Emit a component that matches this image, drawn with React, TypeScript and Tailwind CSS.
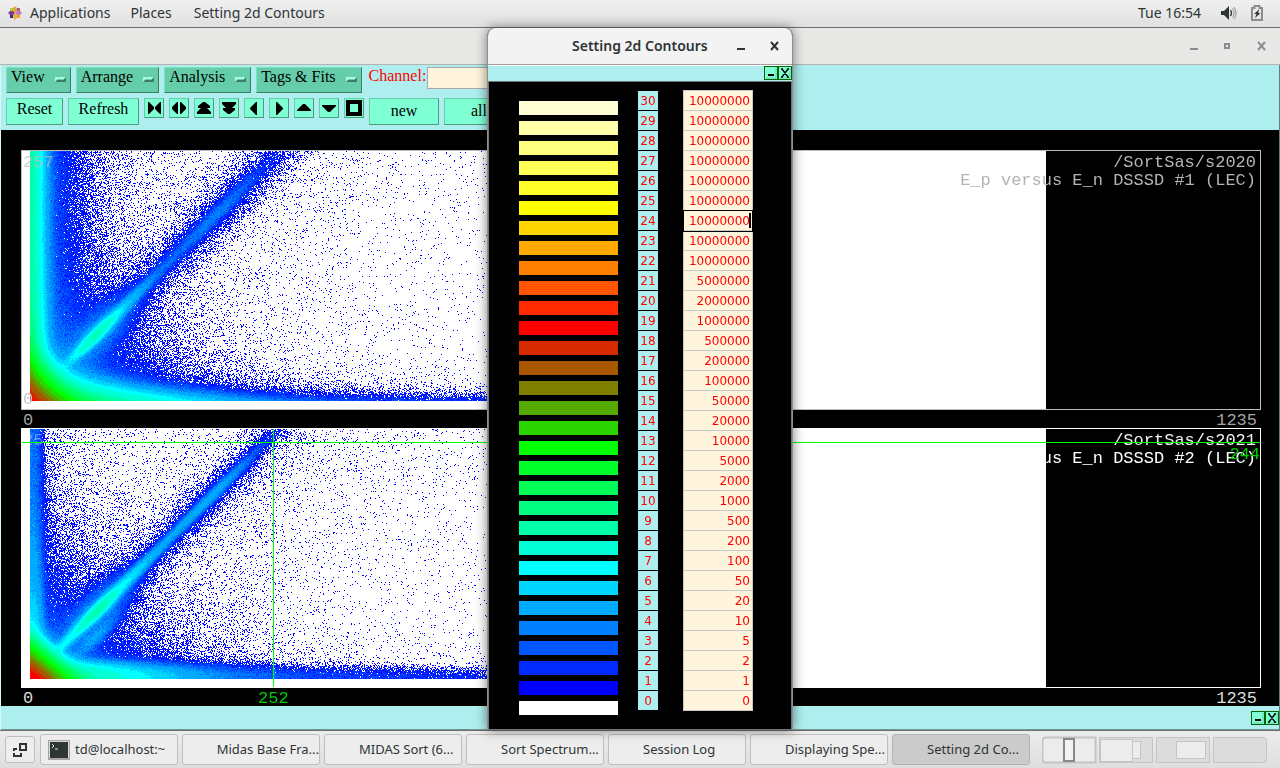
import React, { useEffect, useRef } from 'react';

type Spectrum = 'lec1' | 'lec2';

const PALETTE = [
  '#ffffff', '#0000ff', '#002aff', '#0055ff', '#0080ff', '#00aaff', '#00d5ff', '#00ffff',
  '#00ffd5', '#00ffaa', '#00ff80', '#00ff55', '#00ff2a', '#00ff00', '#2ad500', '#55aa00',
  '#808000', '#aa5500', '#d52a00', '#ff0000', '#ff2a00', '#ff5500', '#ff8000', '#ffaa00',
  '#ffd500', '#ffff00', '#ffff2a', '#ffff55', '#ffff80', '#ffffaa', '#ffffd5',
];

const LIMITS = [
  0, 1, 2, 5, 10, 20, 50, 100, 200, 500, 1000, 2000, 5000, 10000, 20000, 50000,
  100000, 200000, 500000, 1000000, 2000000, 5000000,
  10000000, 10000000, 10000000, 10000000, 10000000, 10000000, 10000000, 10000000, 10000000,
];

const levels = LIMITS.map((limit, index) => ({ index, limit, color: PALETTE[index] })).reverse();

const createRandom = (seed: number) => {
  let state = seed;
  return () => {
    state = (Math.imul(state, 1664525) + 1013904223) >>> 0;
    return state / 4294967296;
  };
};

const gauss = (v: number, sigma: number) => Math.exp(-(v * v) / (2 * sigma * sigma));

// expected counts per channel, x and y measured from the bottom left corner
const density1 = (x: number, y: number) => {
  const t = (x + y) / 2;
  const d = (x - y) / 1.414;
  const low = 1 + 5 * Math.exp(-y / 35);
  const corner = 2e6 * Math.exp(-(x + y + (x * y) / 60) / 8);
  const vertical =
    800 * low * Math.exp(-Math.pow(x / 7, 1.4)) +
    13 * Math.exp(-Math.pow(x / 22, 1.2)) +
    0.7 * Math.exp(-x / 50);
  const horizontal =
    (8000 * Math.exp(-x / 36) + 8 * Math.exp(-x / 400)) *
      Math.exp(-Math.pow(y / (4 + 8 * Math.exp(-x / 90)), 1.25)) +
    9 * Math.exp(-y / 11) * Math.exp(-x / 130);
  const ridge =
    (500 * gauss(t - 66, 11) + 50 * gauss(t - 88, 18) + 40 * gauss(t - 40, 12)) * gauss(d, 3) +
    (5 * gauss(t - 125, 30) + 11 * gauss(t - 185, 26)) * gauss(d, 4) +
    18 * gauss(t - 66, 20) * gauss(d, 10) +
    (0.9 * gauss(t - 180, 45) + 0.5) * gauss(d, 12);
  const cloud = 70 * Math.exp(-(x + y) / 38);
  const haze = 0.02 + 0.11 * Math.exp(-Math.abs(d) / 70) * (x > 330 ? 0.5 : 1);
  return corner + vertical + horizontal + ridge + cloud + haze;
};

const density2 = (x: number, y: number) => {
  const t = (x + y) / 2;
  const d = (x - y + 1) / 1.414;
  const corner = 3e6 * Math.exp(-(Math.pow(x, 1.2) * 0.55 + Math.pow(y, 1.2) * 0.7 + (x * y) / 60) / 8);
  const vertical =
    (9 + 260 * Math.exp(-y / 45)) * Math.exp(-Math.pow(x / 10, 2.6)) + 0.8 * Math.exp(-x / 18);
  const horizontal =
    (3000 * Math.exp(-x / 34) + 12 * Math.exp(-x / 260)) * Math.exp(-Math.pow(y / (12 - x / 130), 2.4)) +
    3 * Math.exp(-y / 13) * Math.exp(-x / 130);
  const ridge =
    (600 * gauss(t - 67, 11) + 100 * gauss(t - 90, 20) + 100 * gauss(t - 35, 14)) * gauss(d, 3) +
    (14 * gauss(t - 130, 30) + 28 * gauss(t - 180, 26)) * gauss(d, 3) +
    20 * gauss(t - 66, 20) * gauss(d, 9) +
    1.2 * gauss(t - 175, 42) * gauss(d, 9) +
    0.3 * gauss(d, 14);
  const streak = 20 * gauss(x - y - 24, 6) * gauss(t - 52, 13);
  const cloud = 28 * Math.exp(-(x + y) / 44);
  const haze =
    0.02 + 0.11 * Math.exp(-Math.abs(d) / 80) + 0.12 * gauss(x - 195 - y / 4, 14) * Math.exp(-y / 90);
  return corner + vertical + horizontal + ridge + streak + cloud + haze;
};

const sample = (mean: number, random: () => number) => {
  if (mean > 25) {
    return mean + Math.sqrt(mean) * (random() + random() + random() - 1.5) * 2;
  }
  const limit = Math.exp(-mean);
  let count = 0;
  let product = random();
  while (product > limit) {
    count += 1;
    product *= random();
  }
  return count;
};

const levelFor = (count: number) => {
  let level = 0;
  for (let i = 1; i < 20 && count >= LIMITS[i]; i += 1) {
    level = i;
  }
  return level;
};

const HeatMap = ({ spectrum, seed }: { spectrum: Spectrum; seed: number }) => {
  const ref = useRef<HTMLCanvasElement>(null);

  useEffect(() => {
    const ctx = ref.current?.getContext('2d');
    if (!ctx) return;
    const random = createRandom(seed);
    const density = spectrum === 'lec1' ? density1 : density2;
    ctx.fillStyle = '#ffffff';
    ctx.fillRect(0, 0, 1024, 258);
    for (let y = 0; y < 250; y += 1) {
      for (let x = 0; x < 560; x += 1) {
        const level = levelFor(sample(density(x, y), random));
        if (level > 0) {
          ctx.fillStyle = PALETTE[level];
          ctx.fillRect(x + 8, 249 - y, 1, 1);
        }
      }
    }
  }, [spectrum, seed]);

  return <canvas ref={ref} width={1024} height={258} className="block shrink-0" />;
};

interface PlotProps {
  spectrum: Spectrum;
  seed: number;
  path: string;
  title: string;
  active?: boolean;
}

const Plot = ({ spectrum, seed, path, title, active }: PlotProps) => (
  <section
    className={`font-['Liberation_Mono',monospace] text-[17px] leading-[18px] ${
      active ? 'text-[#dcdcdc]' : 'text-[#a4a4a4]'
    }`}
  >
    <div className={`relative flex overflow-hidden border ${active ? 'border-white' : 'border-[#bebebe]'}`}>
      <HeatMap spectrum={spectrum} seed={seed} />
      {!active && <span className="absolute bottom-0 left-px text-[#c8c8c8]">0</span>}
      <span className={`absolute top-[3px] left-px ${active ? 'text-white/40' : 'text-[#bebebe]/70'}`}>257</span>
      <div className={`absolute top-[3px] right-1 text-right ${active ? 'text-[#f0f0f0]' : 'text-[#b4b4b4]'}`}>
        <p>{path}</p>
        <p className={active ? 'text-white' : ''}>{title}</p>
      </div>
      {active && (
        <>
          <div className="absolute inset-x-0 top-[13px] h-px bg-[#00ff00]" />
          <div className="absolute inset-y-0 left-[251px] w-px bg-[#00ff00]" />
          <span className="absolute top-[17px] right-0 text-[#00cd00]">244</span>
        </>
      )}
    </div>
    <div className="relative flex h-[18px] justify-between pr-1 pl-0.5 leading-[22px]">
      <span>0</span>
      {active && <span className="absolute left-[237px] text-[#00cd00]">252</span>}
      <span>1235</span>
    </div>
  </section>
);

const MenuButton = ({ label }: { label: string }) => (
  <button
    type="button"
    className="flex h-[26px] shrink-0 items-start gap-2.5 border border-t-[#7fe0c0] border-r-[#3b7d67] border-b-[#3b7d67] border-l-[#7fe0c0] bg-[#66cdaa] px-1 whitespace-nowrap"
  >
    <span>{label}</span>
    <span className="mt-[9px] h-[5px] w-[11px] border-2 border-t-[#a8fbe0] border-r-[#3b7d67] border-b-[#3b7d67] border-l-[#a8fbe0] bg-[#66cdaa]" />
  </button>
);

const bevel =
  'shrink-0 border border-t-[#66cdaa] border-l-[#66cdaa] border-r-[#4a9c80] border-b-[#4a9c80] bg-[#7fffd4]';

const ARROWS = [
  { name: 'Compress', d: 'M3 3h1l5 5v2l-5 5H3zM16 3h-1l-5 5v2l5 5h1z' },
  { name: 'Expand', d: 'M8 3H7L2 8v2l5 5h1zM10 3h1l5 5v2l-5 5h-1z' },
  { name: 'Page up', d: 'M8 3h2l5 4v2h-3l4 4v2H2v-2l4-4H3V7z' },
  { name: 'Page down', d: 'M8 15h2l5-4V9h-3l4-4V3H2v2l4 4H3v2z' },
  { name: 'Left', d: 'M12 3v13h-1l-6-6V9l6-6z' },
  { name: 'Right', d: 'M6 3v13h1l6-6V9L7 3z' },
  { name: 'Up', d: 'M8 5h2l6 6v1H2v-1z' },
  { name: 'Down', d: 'M8 13h2l6-6V6H2v1z' },
  { name: 'Full view', d: 'M1 1h16v16H1zM5 5v8h8V5z' },
];

const MiniControls = () => (
  <div className="flex">
    <button type="button" aria-label="Iconify" className="h-3.5 w-3.5 border border-[#006400] bg-[#7fffd4]">
      <svg viewBox="0 0 12 12" className="block h-3 w-3">
        <path d="M11 1v10H1" fill="none" stroke="#66cdaa" />
        <path d="M3 7h6v2H3z" />
      </svg>
    </button>
    <button type="button" aria-label="Dismiss" className="h-3.5 w-3.5 border border-[#006400] bg-[#7fffd4]">
      <svg viewBox="0 0 12 12" className="block h-3 w-3">
        <path d="M11 1v10H1" fill="none" stroke="#66cdaa" />
        <path d="M2 2h2M8 2h2M2 10h2M8 10h2M3 2l6 8M9 2l-6 8" fill="none" stroke="#000" strokeWidth="1.4" />
      </svg>
    </button>
  </div>
);

const TopBar = () => (
  <header className="flex h-7 shrink-0 items-center border-b border-[#6f6f6f] bg-linear-to-b from-[#f0f0f0] to-[#e0e0e0] pb-0.5">
    <svg viewBox="0 0 14 14" className="ml-2 h-3.5 w-3.5">
      <path d="M7 0l2 2v3L7 7 5 5V2z" fill="#e0a92c" />
      <path d="M14 7l-2 2H9L7 7l2-2h3z" fill="#c47ab8" />
      <path d="M7 14l-2-2V9l2-2 2 2v3z" fill="#e8b04a" />
      <path d="M0 7l2-2h3l2 2-2 2H2z" fill="#8a3a8c" />
      <path d="M2 2h3v3H2z" fill="#a6cf56" />
      <path d="M9 2h3v3H9z" fill="#b5559f" />
      <path d="M2 9h3v3H2z" fill="#34347c" />
      <path d="M9 9h3v3H9z" fill="#efa52c" />
    </svg>
    <button type="button" className="ml-2">Applications</button>
    <button type="button" className="ml-5">Places</button>
    <button type="button" className="ml-[22px]">Setting 2d Contours</button>
    <time className="ml-auto">Tue 16:54</time>
    <svg viewBox="0 0 16 14" className="ml-5 h-3.5 w-4">
      <path d="M0 5h3l5-5v14L3 9H0z" fill="#2e3436" />
      <path d="M9.500 4q2 3 0 6" fill="none" stroke="#2e3436" strokeWidth="1.300" />
      <path d="M11.500 2.500q3 4.500 0 9M13 1q4 6 0 12" fill="none" stroke="#a5a7a7" strokeWidth="1.300" />
    </svg>
    <svg viewBox="0 0 12 16" className="mr-[17px] ml-3.5 h-4 w-3">
      <path d="M1 3h2.500V1h5v2H11v12H1z" fill="none" stroke="#8a8d8e" strokeWidth="2" />
      <path d="M8.500 4L3 9h2.500L4 13l5.500-5H7z" fill="#2e3436" />
    </svg>
  </header>
);

const WindowHeader = () => (
  <div className="flex h-[37px] items-center justify-end border-b border-[#b3b3b0] bg-[#e8e8e7] pr-3.5">
    <svg viewBox="0 0 78 12" className="h-3 w-[78px]" fill="none" stroke="#8b8e8f" strokeWidth="2">
      <path d="M2 9h8" />
      <path d="M37 4h4v4h-4z" />
      <path d="M70 2l7 8M77 2l-7 8" />
    </svg>
  </div>
);

const Toolbar = () => (
  <div className="flex h-[65px] flex-col gap-1 overflow-hidden bg-[#afeeee] pt-0.5 pl-[5px] font-['Liberation_Serif',serif] text-base leading-[18px] text-black">
    <div className="flex gap-[5px]">
      <MenuButton label="View" />
      <MenuButton label="Arrange" />
      <MenuButton label="Analysis" />
      <MenuButton label="Tags &amp; Fits" />
      <label htmlFor="channel" className="ml-0.5 text-[#ff0000]">Channel:</label>
      <input
        id="channel"
        className="-ml-1 h-[22px] w-40 border border-[#a9a9a9] bg-[#fff5dc] px-1 outline-none"
        defaultValue=""
      />
    </div>
    <div className="flex items-start gap-[5px] pt-px">
      <button type="button" className={`h-[27px] w-[57px] pb-1.5 ${bevel}`}>Reset</button>
      <button type="button" className={`h-[27px] w-[71px] pb-1.5 ${bevel}`}>Refresh</button>
      {ARROWS.map((arrow) => (
        <button key={arrow.name} type="button" aria-label={arrow.name} className={`h-5 w-5 ${bevel}`}>
          <svg viewBox="0 0 18 18" className="block h-full w-full" fillRule="evenodd">
            <path d={arrow.d} />
          </svg>
        </button>
      ))}
      <button type="button" className={`h-[27px] w-[70px] pb-0.5 ${bevel}`}>new</button>
      <button type="button" className={`h-[27px] w-[70px] pb-0.5 ${bevel}`}>all</button>
    </div>
  </div>
);

const ContourDialog = () => (
  <div
    role="dialog"
    aria-labelledby="contour-title"
    className="absolute inset-y-0 left-1/2 flex w-[306px] -translate-x-1/2 flex-col overflow-hidden rounded-t-lg border-x border-[#8f8f8f] bg-black shadow-[0_0_12px_rgba(0,0,0,0.5)]"
  >
    <div className="flex h-[37px] shrink-0 items-center border-b border-[#a0a09c] bg-[#f3f3f3]">
      <h1 id="contour-title" className="flex-1 pl-[84px] text-sm font-semibold whitespace-nowrap">
        Setting 2d Contours
      </h1>
      <svg viewBox="0 0 44 12" className="mr-3 h-3 w-11" fill="none" stroke="#2e3436" strokeWidth="2">
        <path d="M1 9h8" />
        <path d="M35 2l7 8M42 2l-7 8" />
      </svg>
    </div>
    <div className="flex h-4 shrink-0 items-start justify-end border-t border-white bg-[#afeeee]">
      <MiniControls />
    </div>
    <div className="flex flex-1 border border-[#777] pl-[30px] font-['DejaVu_Sans',sans-serif] text-xs text-[#ff0000]">
      <div className="flex flex-col gap-1.5 pt-[19px]">
        {levels.map((level) => (
          <div key={level.index} className="h-3.5 w-[99px]" style={{ backgroundColor: level.color }} />
        ))}
      </div>
      <div className="ml-5 flex flex-col gap-px pt-[9px]">
        {levels.map((level) => (
          <label
            key={level.index}
            htmlFor={`level-${level.index}`}
            className="h-[19px] w-5 bg-[#afeeee] text-center leading-5"
          >
            {level.index}
          </label>
        ))}
      </div>
      <div className="mt-2 ml-[25px] w-[70px] self-start divide-y divide-[#c8c8c8] border border-[#c8c8c8] bg-[#fff5dc]">
        {levels.map((level) => (
          <div
            key={level.index}
            className={`relative h-5 last:h-[19px] ${level.index === 24 ? 'outline outline-black' : ''}`}
          >
            <input
              id={`level-${level.index}`}
              defaultValue={level.limit}
              className="block h-[19px] w-full pr-0.5 text-right outline-none"
            />
            {level.index === 24 && <span className="absolute top-0.5 right-px h-[15px] w-0.5 bg-black" />}
          </div>
        ))}
      </div>
    </div>
  </div>
);

const TASKS = [
  'td@localhost:~',
  'Midas Base Fra...',
  'MIDAS Sort (6...',
  'Sort Spectrum...',
  'Session Log',
  'Displaying Spe...',
  'Setting 2d Co...',
];

const Taskbar = () => (
  <footer className="flex h-[38px] shrink-0 items-center gap-1 border-t border-[#6f6f6f] bg-linear-to-b from-[#ececec] to-[#dedede] pl-[5px] text-[13px]">
    <button
      type="button"
      aria-label="Show desktop"
      className="mr-px flex h-[27px] w-[30px] shrink-0 items-center justify-center rounded-[3px] border border-[#bfbfbf] bg-[#ededed]"
    >
      <svg viewBox="0 0 14 14" className="h-3.5 w-3.5" fill="none" stroke="#2e3436" strokeWidth="2">
        <path d="M7 1h6v6H7z" />
        <path d="M4 6H1v2M1 10v3h7v-3" />
      </svg>
    </button>
    {TASKS.map((task, index) => (
      <button
        key={task}
        type="button"
        className={`flex h-[31px] w-[138px] shrink-0 items-center rounded-[3px] border pl-[7px] whitespace-nowrap ${
          index === TASKS.length - 1 ? 'border-[#b3b3b3] bg-[#cbcbcb]' : 'border-[#bfbfbf] bg-[#ededed]'
        }`}
      >
        {index === 0 ? (
          <svg viewBox="0 0 22 20" className="mr-[5px] h-5 w-[22px]">
            <path d="M0 0h22v20H0z" fill="#a6a6a6" />
            <path d="M1 1h20v17H1z" fill="#d6d6d6" />
            <path d="M2 2h18v16H2z" fill="#2f3735" />
            <path d="M4 4l2 2-2 2M7 9h3" fill="none" stroke="#e6e6e6" />
          </svg>
        ) : (
          <span className="mr-[5px] w-[22px]" />
        )}
        {task}
      </button>
    ))}
    <svg viewBox="0 0 225 28" className="ml-2 h-7 w-[225px] shrink-0" stroke="#c4c4c4">
      <path d="M3.500 1.500h50v25h-50q-3 0-3-3v-19q0-3 3-3z" fill="#ececec" strokeWidth="2" />
      <path d="M22 3h10v22H22z" fill="#f3f3f1" stroke="#888" strokeWidth="2" />
      <path d="M57.500 1.500h53v25h-53zM114.500 1.500h53v25h-53z" fill="#dcdcdc" />
      <path d="M86.500 5.500h12v17h-12z" fill="#ececec" />
      <path d="M58.500 3.500h32v22h-32zM134.500 5.500h29v17h-29z" fill="#ececec" />
      <path d="M171.500 1.500h50q3 0 3 3v19q0 3-3 3h-50z" fill="#dcdcdc" />
    </svg>
  </footer>
);

const App = () => {
  return (
    <div className="flex min-h-screen flex-col overflow-hidden bg-[#e8e8e7] font-['Noto_Sans',sans-serif] text-sm text-[#2e3436]">
      <TopBar />
      <main className="relative flex flex-1 flex-col">
        <WindowHeader />
        <div className="flex flex-1 flex-col border-x border-l-[#d7f6f6] border-r-[#5f8080]">
          <Toolbar />
          <div className="flex flex-1 flex-col bg-black pt-5 pr-[18px] pl-5">
            <Plot spectrum="lec1" seed={2020} path="/SortSas/s2020" title="E_p versus E_n DSSSD #1 (LEC)" />
            <Plot spectrum="lec2" seed={2021} path="/SortSas/s2021" title="E_p versus E_n DSSSD #2 (LEC)" active />
          </div>
          <div className="flex h-6 items-center justify-end border-b border-[#6a9a9a] bg-[#afeeee]">
            <MiniControls />
          </div>
        </div>
        <ContourDialog />
      </main>
      <Taskbar />
    </div>
  );
};

export default App;
